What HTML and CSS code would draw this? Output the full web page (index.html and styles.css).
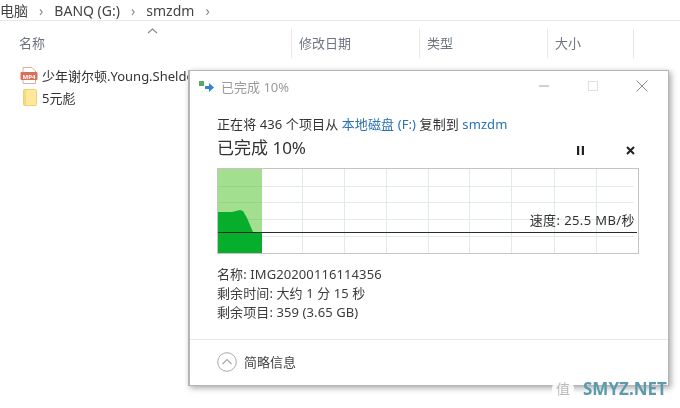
FILE: index.html
```html
<!DOCTYPE html>
<html>
<head>
    <title>smzdm</title>
    <link rel="stylesheet" href="styles.css">
</head>
<body>
    <div class="explorer">
        <div class="breadcrumb">
            <span>电脑</span><span class="crumb-sep">›</span>
            <span>BANQ (G:)</span><span class="crumb-sep">›</span>
            <span>smzdm</span><span class="crumb-sep">›</span>
        </div>
        <div class="columns">
            <div class="col col-name">名称
                <svg class="sort-arrow" width="11" height="6" viewBox="0 0 11 6"><path d="M1 5 5.500 1 10 5" fill="none" stroke="#8a8a8a" stroke-width="1.200"/></svg>
            </div>
            <div class="col col-date">修改日期</div>
            <div class="col col-type">类型</div>
            <div class="col col-size">大小</div>
        </div>
        <div class="files">
            <div class="file">
                <svg class="file-icon" width="18" height="19" viewBox="0 0 18 19">
                    <path d="M3 1.500h9l3.500 3.500v12.500H3z" fill="#fff" stroke="#dcaa9e"/>
                    <rect x="0.500" y="6" width="17" height="8" rx="1" fill="#d8705b"/>
                    <text class="mp4-label" x="9" y="12.500" text-anchor="middle">MP4</text>
                </svg>
                <span>少年谢尔顿.Young.Sheldon</span>
            </div>
            <div class="file">
                <svg class="file-icon" width="18" height="19" viewBox="0 0 18 19">
                    <rect x="3.500" y="1.500" width="13" height="16" rx="1" fill="#fde89c" stroke="#efd070"/>
                    <rect x="4" y="2" width="2" height="15" fill="#f8d979"/>
                </svg>
                <span>5元彪</span>
            </div>
        </div>
    </div>

    <div class="dialog">
        <div class="title-bar">
            <svg class="title-icon" width="16" height="12" viewBox="0 0 16 12">
                <rect x="0" y="1" width="5" height="5" fill="#58a868"/>
                <path d="M6 6h4V3l5 4.500-5 4.500V9H6z" fill="#2f86d6"/>
            </svg>
            <span class="title-text">已完成 10%</span>
            <div class="win-buttons">
                <svg width="12" height="12" viewBox="0 0 12 12"><path d="M1 6h10" stroke="#a0a0a0"/></svg>
                <svg width="12" height="12" viewBox="0 0 12 12"><rect x="1.500" y="1.500" width="9" height="9" fill="none" stroke="#e0e0e0"/></svg>
                <svg width="12" height="12" viewBox="0 0 12 12"><path d="M.5.5l11 11M11.500.5l-11 11" stroke="#8c8c8c"/></svg>
            </div>
        </div>
        <div class="dialog-body">
            <div class="copy-line">正在将 436 个项目从 <span class="link">本地磁盘 (F:)</span> 复制到 <span class="link">smzdm</span></div>
            <div class="status-row">
                <span class="status">已完成 10%</span>
                <div class="controls">
                    <svg width="9" height="9" viewBox="0 0 9 9"><path d="M1 0h2.200v9H1zM5.800 0H8v9H5.800z" fill="#222"/></svg>
                    <svg width="9" height="9" viewBox="0 0 9 9"><path d="M1 1l7 7M8 1L1 8" stroke="#222" stroke-width="2"/></svg>
                </div>
            </div>
            <div class="chart">
                <svg width="422" height="86" viewBox="0 0 422 86">
                    <rect x="1" y="1" width="44" height="84" fill="#a3df8e"/>
                    <g stroke="#e0ece5" fill="none">
                        <path d="M85.500 1v84M127.500 1v84M169.500 1v84M211.500 1v84M252.500 1v84M294.500 1v84M337.500 1v84M379.500 1v84"/>
                        <path d="M45 18.500h372M45 34.500h372M45 51.500h372M45 68.500h372"/>
                    </g>
                    <g stroke="#93d580" fill="none">
                        <path d="M1 18.500h44M1 34.500h44M1 51.500h44"/>
                    </g>
                    <path d="M1 44H15L23 42 26 43 30 50 36 64H45V85H1z" fill="#06ae2b"/>
                    <path d="M1 64.500h419" stroke="#2a2a2a" fill="none"/>
                </svg>
                <span class="speed">速度: 25.5 MB/秒</span>
            </div>
            <div class="details">
                <div>名称: IMG20200116114356</div>
                <div>剩余时间: 大约 1 分 15 秒</div>
                <div>剩余项目: 359 (3.65 GB)</div>
            </div>
        </div>
        <div class="dialog-footer">
            <svg width="20" height="20" viewBox="0 0 20 20">
                <circle cx="10" cy="10" r="9.300" fill="#fff" stroke="#a8a8a8"/>
                <path d="M5.500 12 10 7.500 14.500 12" fill="none" stroke="#a8a8a8" stroke-width="1.200"/>
            </svg>
            <span>简略信息</span>
        </div>
    </div>

    <div class="watermark">
        <span class="wm-badge">值</span>
        <span class="wm-text">SMYZ.NET</span>
    </div>
</body>
</html>
```

FILE: styles.css
```css
html, body {
    margin: 0;
    height: 100%;
    overflow: hidden;
}
body {
    background: #fff;
    color: #333;
    font-family: "Noto Sans", "Noto Sans CJK SC", sans-serif;
    font-size: 13px;
    position: relative;
    filter: blur(0.35px);
}
.breadcrumb {
    height: 20px;
    display: flex;
    align-items: center;
    gap: 11px;
    font-size: 14px;
    color: #444;
    border-bottom: 1px solid #e8e8e8;
    white-space: nowrap;
}
.crumb-sep {
    color: #888;
}
.columns {
    display: flex;
    height: 37px;
    color: #6d7580;
}
.col {
    display: flex;
    align-items: center;
    padding-left: 7px;
    padding-bottom: 3px;
    margin-top: 8px;
    height: 29px;
    border-right: 1px solid #e8e8e8;
    box-sizing: border-box;
    position: relative;
}
.col-name {
    width: 292px;
    padding-left: 19px;
}
.col-date {
    width: 128px;
}
.col-type {
    width: 128px;
}
.col-size {
    width: 86px;
}
.sort-arrow {
    position: absolute;
    left: 147px;
    top: -1px;
}
.files {
    padding: 6px 0 0 20px;
}
.file {
    display: flex;
    align-items: center;
    gap: 4px;
    height: 22px;
    white-space: nowrap;
    color: #333;
}
.mp4-label {
    fill: #fff;
    font-size: 6px;
    font-weight: bold;
}
.dialog {
    position: absolute;
    left: 188px;
    top: 70px;
    width: 478px;
    height: 314px;
    background: #fff;
    border: 1px solid #b5b5b5;
    border-left-width: 2px;
    box-shadow: 2px 2px 6px rgba(0,0,0,0.35);
    display: flex;
    flex-direction: column;
}
.title-bar {
    display: flex;
    align-items: center;
    height: 30px;
    padding: 0 20px 0 9px;
    color: #9a9a9a;
}
.title-icon {
    margin-right: 6px;
}
.win-buttons {
    margin-left: auto;
    display: flex;
    gap: 37px;
}
.dialog-body {
    padding: 15px 27px 0 27px;
    flex: 1;
}
.copy-line {
    color: #333;
    line-height: 17px;
    letter-spacing: 0.1px;
}
.link {
    color: #2a72b5;
}
.status-row {
    display: flex;
    align-items: center;
    height: 24px;
    margin-top: 1px;
}
.status {
    font-size: 17px;
    color: #333;
}
.controls {
    margin-left: auto;
    display: flex;
    gap: 41px;
    padding-right: 6px;
    padding-top: 8px;
}
.chart {
    position: relative;
    width: 422px;
    height: 86px;
    margin-top: 10px;
    background: #fff;
    outline: 1px solid #c4c4c4;
    outline-offset: -1px;
}
.chart svg {
    display: block;
}
.speed {
    position: absolute;
    right: 4px;
    top: 44px;
    color: #333;
    line-height: 17px;
    letter-spacing: 0.4px;
}
.details {
    margin-top: 11px;
    line-height: 19px;
    color: #3c3c3c;
    letter-spacing: 0.1px;
}
.dialog-footer {
    height: 46px;
    border-top: 1px solid #e8e8e8;
    display: flex;
    align-items: center;
    gap: 7px;
    padding-left: 27px;
    padding-bottom: 2px;
    box-sizing: border-box;
    color: #444;
}
.watermark {
    position: absolute;
    left: 552px;
    top: 378px;
    display: flex;
    align-items: center;
    gap: 9px;
}
.wm-badge {
    width: 22px;
    height: 22px;
    border-radius: 50%;
    background: rgba(255,255,255,0.85);
    color: #bbb;
    text-align: center;
    line-height: 22px;
    font-size: 14px;
}
.wm-text {
    color: #5d9bac;
    font-size: 17px;
    font-weight: bold;
    line-height: 22px;
}
```
